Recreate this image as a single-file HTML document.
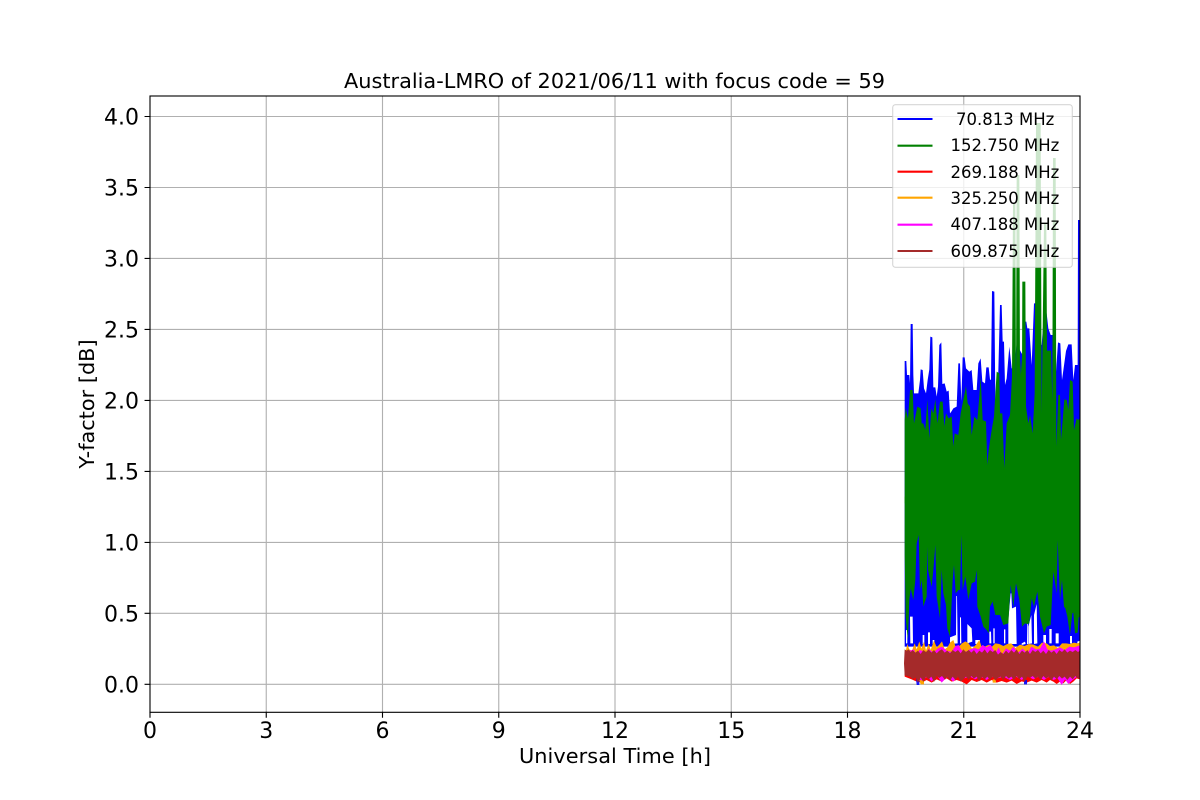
<!DOCTYPE html>
<html>
<head>
<meta charset="utf-8">
<style>
html,body{margin:0;padding:0;background:#fff;width:1200px;height:800px;overflow:hidden}
svg{display:block}
text{font-family:"DejaVu Sans","Liberation Sans",sans-serif;fill:#000}
.l{font-size:20.83px}
.g{font-size:16.5px}
</style>
</head>
<body>
<svg width="1200" height="800" viewBox="0 0 1200 800" xmlns="http://www.w3.org/2000/svg">
<rect width="1200" height="800" fill="#fff"/>
<g stroke="#b0b0b0" stroke-width="1.11" fill="none">
<path d="M266.25 96V712.3M382.5 96V712.3M498.75 96V712.3M615 96V712.3M731.25 96V712.3M847.5 96V712.3M963.75 96V712.3"/>
<path d="M150 684.3H1080M150 613.3H1080M150 542.4H1080M150 471.4H1080M150 400.4H1080M150 329.4H1080M150 258.4H1080M150 187.5H1080M150 116.5H1080"/>
</g>
<g transform="translate(890 280) scale(.33333)">
<polygon fill="#0000ff" points="44,1100 44,243 49,243 51,285 58,285 60,310 62,132 68,132 70,285 72,340 85,340 90,300 92,268 98,270 102,325 108,340 113,300 118,268 121,170 127,172 130,322 136,322 140,350 144,320 148,195 154,187 157,312 164,310 170,335 176,332 180,400 184,395 190,385 200,380 205,250 210,250 214,365 218,232 224,232 228,265 238,275 245,270 250,330 260,330 265,250 272,235 277,305 285,310 289,262 296,262 300,298 303,300 306,33 313,35 316,360 325,275 330,75 335,75 338,185 342,185 345,315 350,295 358,200 365,265 372,265 380,190 392,215 398,225 405,125 409,125 412,145 418,145 425,255 432,70 438,70 445,190 455,195 462,100 470,100 475,145 482,165 490,165 497,290 504,187 511,190 516,300 528,213 535,193 545,193 550,300 555,255 563,255 564,-180 570,-180 570,1100"/>
<polygon fill="#008000" points="44,670 44,420 47,385 54,415 60,330 68,330 72,430 82,380 92,385 95,430 100,430 106,450 112,358 118,475 124,385 130,400 136,358 142,430 150,365 158,365 163,440 168,400 176,415 185,410 190,500 194,460 205,465 212,400 220,360 228,318 233,370 240,380 245,465 253,410 262,420 268,350 272,290 278,420 288,425 292,555 296,510 305,450 312,410 320,275 328,280 330,400 337,400 343,565 350,430 360,405 366,290 369,-231 376,-231 378,340 380,-315 388,-315 390,290 393,230 396,280 397,5 406,5 408,380 415,430 420,405 428,460 434,340 438,-471 452,-471 455,400 462,-171 469,-171 471,212 483,212 487,365 489,-366 497,-366 499,500 505,345 510,345 513,480 518,420 523,358 530,360 535,390 540,300 548,305 552,450 560,415 564,420 570,415 570,670"/>
</g>
<g transform="translate(890 500) scale(.33333)">
<path fill="#ffffff" d="M60 350L68 350L69 430L61 430ZM48 390L52 390L52 430L48 430ZM98 405L103 405L103 432L98 432ZM114 397L120 397L120 432L114 432ZM128 420L133 420L133 432L128 432ZM180 412L198 405L199 288L201 288L203 430L180 432ZM210 352L213 352L214 430L210 430ZM232 372L245 385L247 425L232 430ZM256 420L270 420L270 432L256 432ZM298 395L303 395L304 430L298 430ZM310 385L314 385L314 430L310 430ZM342 388L346 388L346 430L342 430ZM355 358L362 280L364 280L366 325L378 320L380 432L355 432ZM395 430L405 425L407 432L395 435ZM411 370L413 370L414 432L411 432ZM415 380L424 345L426 430L415 432ZM432 345L440 312L442 430L432 432ZM460 405L468 405L468 432L460 432ZM478 387L485 387L485 430L478 430ZM497 400L506 400L506 430L497 430ZM540 408L546 408L546 430L540 430ZM562 425L570 422L570 432L562 432Z"/>
<polygon fill="#008000" points="44,-10 570,-10 570,350 566,352 563,398 555,400 550,338 547,340 540,405 532,350 526,325 522,320 516,240 510,300 503,120 500,280 490,215 482,375 470,380 462,400 450,350 442,275 432,320 425,295 418,370 412,372 405,370 396,380 388,300 378,250 370,320 362,255 355,370 340,375 330,345 316,345 308,305 300,320 296,400 290,390 280,380 272,350 262,320 260,210 255,245 245,250 235,300 226,230 218,270 214,105 210,270 205,270 197,280 192,195 188,240 180,410 172,385 168,315 160,280 155,210 150,355 140,290 136,135 130,210 125,260 114,210 112,140 110,290 100,320 95,240 90,270 86,105 80,130 76,240 70,300 62,265 58,300 54,420 50,385 47,350 44,165"/>
<polygon fill="#ffa500" points="48,450 52,432 58,448 66,452 74,430 80,448 88,424 94,446 102,425 108,452 116,430 122,450 132,422 140,442 148,434 156,424 164,448 172,442 180,428 190,420 198,444 208,438 216,430 226,424 236,430 246,446 258,434 268,420 276,444 288,438 298,434 306,440 316,430 328,432 340,438 352,432 364,430 376,444 390,434 404,438 416,432 430,434 444,440 456,428 470,430 480,438 492,436 504,444 516,430 528,430 540,432 552,428 562,430 570,428 570,520 44,520"/>
<polygon fill="#ff0000" points="44,470 570,460 570,538 560,535 550,545 540,552 530,540 520,550 510,545 500,552 490,545 480,540 470,548 455,540 440,548 425,542 410,548 395,544 380,552 365,542 350,548 335,543 320,548 305,540 290,548 275,540 260,546 245,540 230,553 215,545 200,540 185,545 170,535 155,545 140,538 125,548 110,540 95,548 80,545 65,538 44,530"/>
<path fill="#0000ff" d="M78 535H88V555H80ZM402 540H411V553H402Z" opacity=".9"/>
<path fill="#ffa500" d="M88 540H102V553H92ZM308 538H318V548H308Z"/>
<polygon fill="#ff00ff" points="44,460 60,452 72,448 80,470 88,450 96,452 106,462 116,446 130,458 144,445 156,440 170,452 184,456 196,438 206,435 214,450 226,456 240,448 254,444 266,448 278,435 290,442 302,434 316,460 326,442 336,464 348,445 360,452 370,440 384,458 398,446 412,460 424,440 438,448 450,446 462,424 472,448 484,452 496,448 510,442 524,450 538,440 552,442 570,436 570,535 562,530 548,540 535,552 525,538 515,555 503,535 490,540 478,530 462,540 446,530 430,538 412,528 395,540 378,530 360,540 340,530 320,536 305,530 290,540 272,530 255,538 240,530 222,535 205,528 190,545 172,530 155,548 140,525 125,545 112,530 95,542 78,530 60,525 44,520"/>
<polygon fill="#a52a2a" points="44,448 50,452 56,448 62,456 68,450 76,458 84,452 92,462 100,450 108,456 116,448 124,458 132,450 140,460 148,452 156,448 164,458 172,452 180,460 188,450 196,456 204,450 212,460 220,448 228,456 236,450 244,458 252,450 260,462 268,452 276,458 284,448 292,460 300,450 308,456 316,450 324,464 332,456 340,462 348,452 356,460 364,450 372,458 380,448 388,462 396,452 404,458 412,450 420,462 428,450 436,456 444,450 452,460 460,452 468,462 476,450 484,458 492,452 500,462 508,450 516,456 524,448 532,458 540,452 548,456 556,450 564,456 570,452 570,532 564,536 556,528 548,538 540,530 532,540 524,530 516,536 508,528 500,538 492,530 484,542 476,530 468,536 460,528 452,540 444,530 436,536 428,528 420,534 412,530 404,546 396,530 388,538 380,528 372,540 364,530 356,536 348,528 340,540 332,530 324,534 316,542 308,530 300,540 292,530 284,538 276,530 268,544 260,530 252,536 244,528 236,540 228,530 220,538 212,545 204,530 196,540 188,530 180,542 172,530 164,538 156,528 148,534 140,528 132,546 124,530 116,538 108,530 100,546 92,532 84,548 76,532 68,538 60,530 52,528 44,526 42,490"/>
</g>
<g fill="none" stroke="#000" stroke-width="1.11" stroke-linecap="square">
<path d="M145.1 116.5H150M145.1 187.5H150M145.1 258.4H150M145.1 329.4H150M145.1 400.4H150M145.1 471.4H150M145.1 542.4H150M145.1 613.3H150M145.1 684.3H150"/>
<path d="M150 712.3V717.2M266.25 712.3V717.2M382.5 712.3V717.2M498.75 712.3V717.2M615 712.3V717.2M731.25 712.3V717.2M847.5 712.3V717.2M963.75 712.3V717.2M1080 712.3V717.2"/>
<rect x="150" y="96" width="930" height="616.3"/>
</g>
<g text-anchor="end" style="font-size:22px">
<text x="139" y="124.5">4.0</text>
<text x="139" y="195.5">3.5</text>
<text x="139" y="266.5">3.0</text>
<text x="139" y="337.5">2.5</text>
<text x="139" y="408.5">2.0</text>
<text x="139" y="479.5">1.5</text>
<text x="139" y="550.5">1.0</text>
<text x="139" y="621.5">0.5</text>
<text x="139" y="692.5">0.0</text>
</g>
<g text-anchor="middle" style="font-size:22px">
<text x="150" y="738">0</text>
<text x="266.25" y="738">3</text>
<text x="382.5" y="738">6</text>
<text x="498.75" y="738">9</text>
<text x="615" y="738">12</text>
<text x="731.25" y="738">15</text>
<text x="847.5" y="738">18</text>
<text x="963.75" y="738">21</text>
<text x="1080" y="738">24</text>
</g>
<text class="l" x="344" y="88" textLength="541">Australia-LMRO of 2021/06/11 with focus code = 59</text>
<text class="l" x="519" y="763" textLength="192">Universal Time [h]</text>
<text class="l" text-anchor="middle" transform="translate(94 404) rotate(-90)">Y-factor [dB]</text>
<rect x="892.7" y="104.7" width="179.6" height="162.6" rx="2.8" fill="#fff" fill-opacity=".8" stroke="#ccc" stroke-opacity=".8" stroke-width="1.11"/>
<g fill="none" stroke-width="2.08">
<path d="M897.5 119H932.5" stroke="#0000ff"/>
<path d="M897.5 145.7H932.5" stroke="#008000"/>
<path d="M897.5 171.7H932.5" stroke="#ff0000"/>
<path d="M897.5 197.7H932.5" stroke="#ffa500"/>
<path d="M897.5 224.7H932.5" stroke="#ff00ff"/>
<path d="M897.5 251H932.5" stroke="#a52a2a"/>
</g>
<g class="g">
<text x="956" y="125">70.813 MHz</text>
<text x="950.5" y="151">152.750 MHz</text>
<text x="950.5" y="178">269.188 MHz</text>
<text x="950.5" y="204">325.250 MHz</text>
<text x="950.5" y="230">407.188 MHz</text>
<text x="950.5" y="257">609.875 MHz</text>
</g>
</svg>
</body>
</html>
